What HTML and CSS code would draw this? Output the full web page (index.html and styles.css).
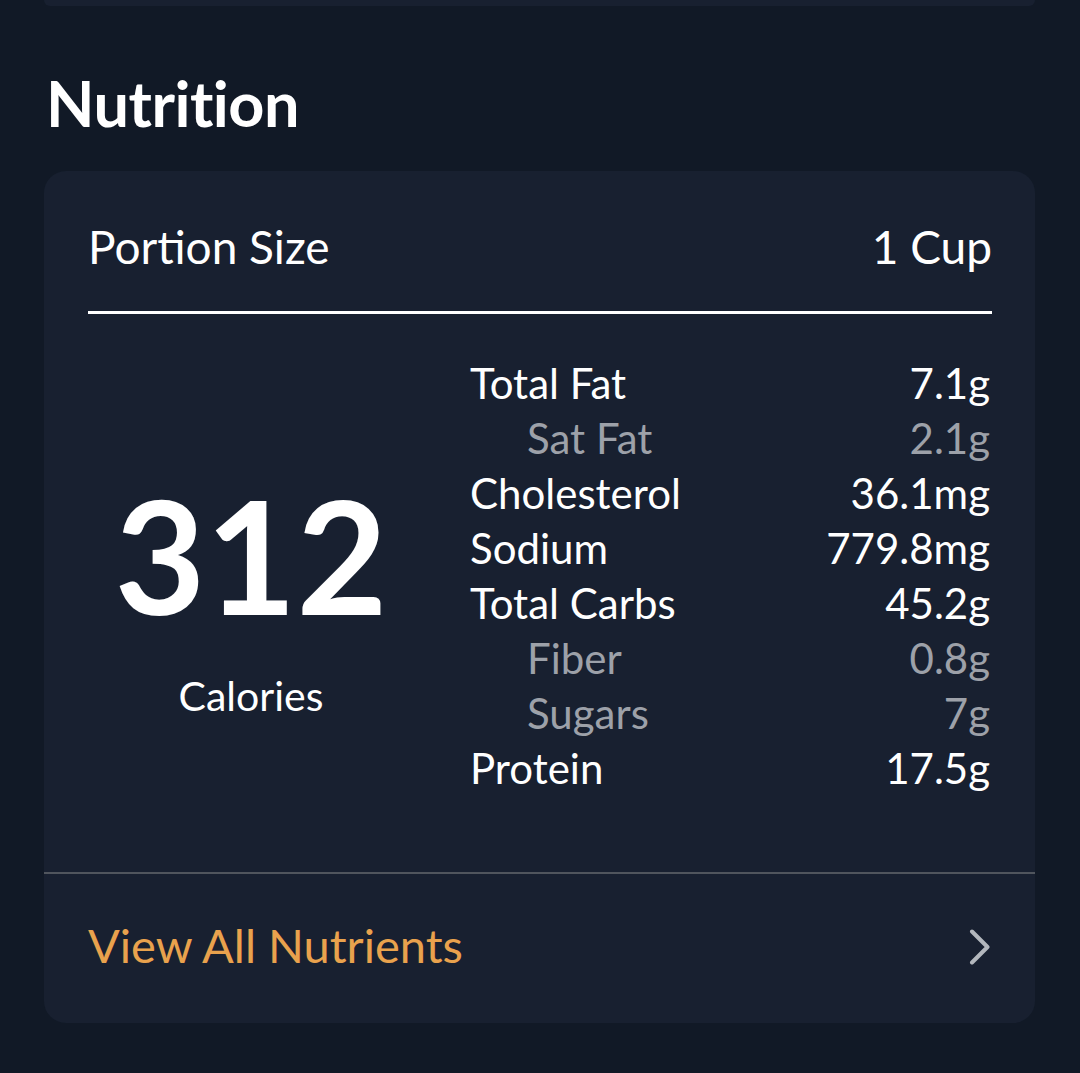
FILE: index.html
```html
<!DOCTYPE html>
<html>
<head>
<meta charset="utf-8">
<link rel="stylesheet" href="styles.css">
</head>
<body>
<div class="page">
  <div class="prev-card"></div>
  <h2 class="section-title">Nutrition</h2>
  <div class="card">
    <div class="portion">
      <div class="portion-row">
        <span>Portion Size</span>
        <span>1 Cup</span>
      </div>
      <div class="portion-rule"></div>
    </div>
    <div class="facts">
      <div class="calories">
        <div class="cal-num">312</div>
        <div class="cal-label">Calories</div>
      </div>
      <div class="nutrients">
        <div class="row"><span>Total Fat</span><span>7.1g</span></div>
        <div class="row sub"><span>Sat Fat</span><span>2.1g</span></div>
        <div class="row"><span>Cholesterol</span><span>36.1mg</span></div>
        <div class="row"><span>Sodium</span><span>779.8mg</span></div>
        <div class="row"><span>Total Carbs</span><span>45.2g</span></div>
        <div class="row sub"><span>Fiber</span><span>0.8g</span></div>
        <div class="row sub"><span>Sugars</span><span>7g</span></div>
        <div class="row"><span>Protein</span><span>17.5g</span></div>
      </div>
    </div>
    <div class="footer">
      <span class="link">View All Nutrients</span>
      <svg class="chevron" width="24" height="36" viewBox="0 0 24 36"><polyline points="4,2.5 19.5,18 4,33.5" fill="none" stroke="#b3b7bd" stroke-width="4" stroke-linecap="round" stroke-linejoin="round"/></svg>
    </div>
  </div>
</div>
</body>
</html>
```

FILE: styles.css
```css
html, body {
  margin: 0;
  padding: 0;
  background: #111926;
}
body {
  font-family: Lato, "Open Sans", sans-serif;
  color: #ffffff;
  height: 1073px;
  overflow: hidden;
}
.page {
  padding: 0 45px 0 44px;
}
.prev-card {
  height: 6px;
  background: #182030;
  border-radius: 0 0 22px 22px;
}
.section-title {
  margin: 59px 0 0 2px;
  font-size: 63px;
  line-height: 76px;
  font-weight: 700;
  letter-spacing: -0.5px;
}
.card {
  margin-top: 30px;
  background: #182030;
  border-radius: 22px;
  overflow: hidden;
}
.portion {
  padding: 48px 43px 0 44px;
}
.portion-row {
  display: flex;
  justify-content: space-between;
  font-size: 46px;
  line-height: 56px;
}
.portion-rule {
  margin-top: 36px;
  height: 3px;
  background: #ffffff;
}
.facts {
  display: grid;
  grid-template-columns: 414px 1fr;
  padding: 42px 45px 76px 0;
  border-bottom: 2px solid #50555d;
}
.calories {
  display: flex;
  flex-direction: column;
  align-items: center;
  padding-top: 120px;
}
.cal-num {
  font-size: 157px;
  line-height: 157px;
  font-weight: 700;
}
.cal-label {
  margin-top: 38px;
  font-size: 41px;
  line-height: 50px;
}
.nutrients {
  padding-left: 12px;
}
.row {
  display: flex;
  justify-content: space-between;
  font-size: 42px;
  line-height: 55px;
}
.row.sub {
  color: #9da1a9;
}
.row.sub span:first-child {
  padding-left: 57px;
}
.footer {
  display: flex;
  justify-content: space-between;
  align-items: center;
  padding: 43px 43px 50px 44px;
}
.link {
  font-size: 47px;
  line-height: 56px;
  color: #e9a24d;
}
.chevron {
  display: block;
  margin-top: 4px;
}
```
